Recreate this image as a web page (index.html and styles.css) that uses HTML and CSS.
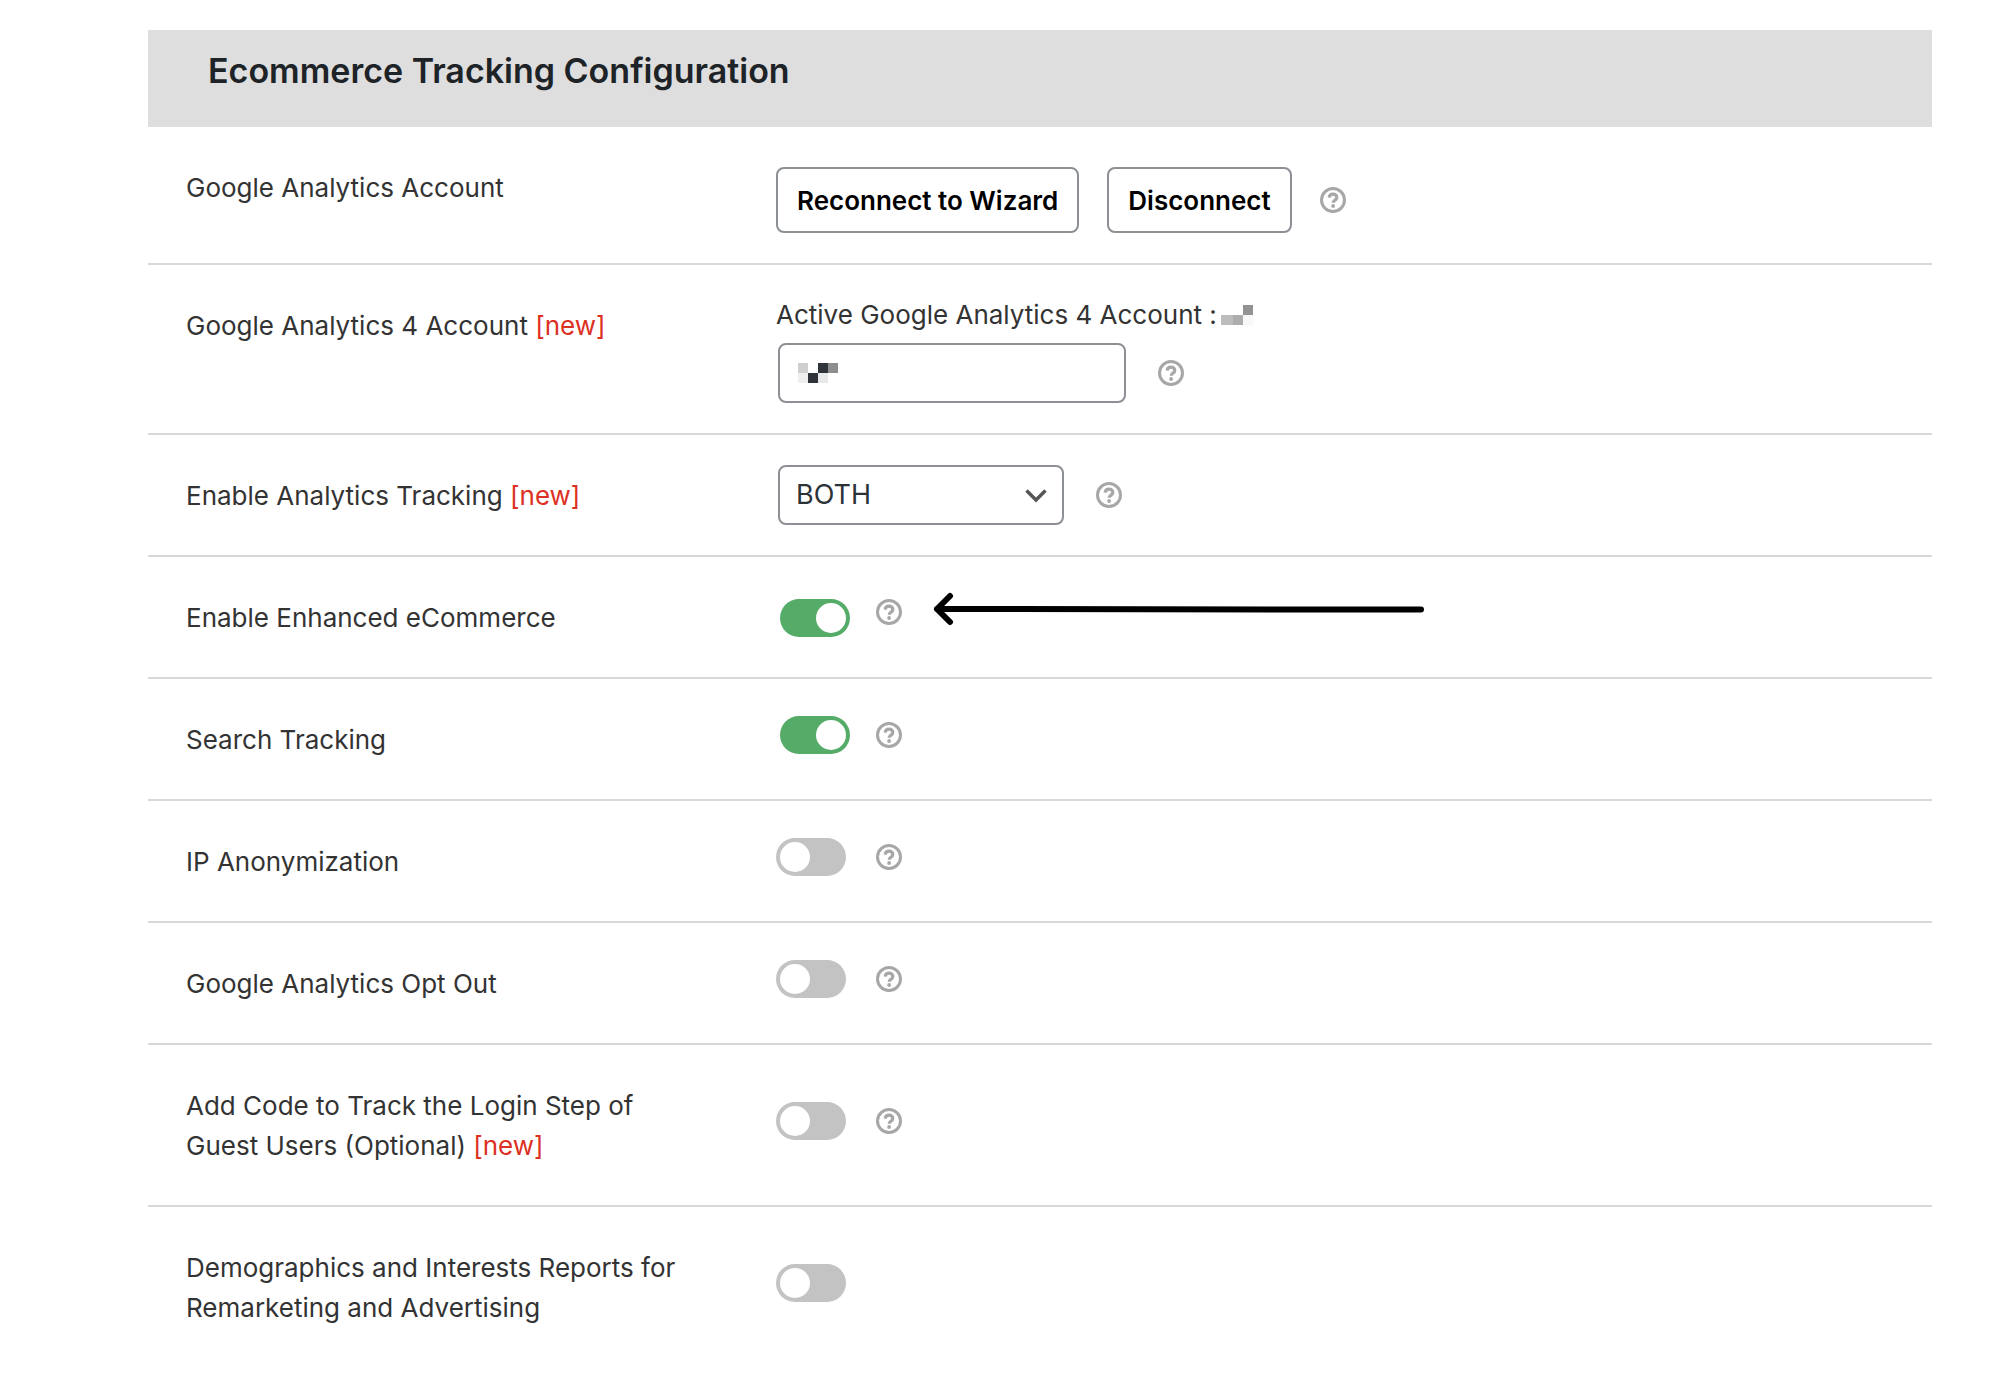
FILE: index.html
```html
<!DOCTYPE html>
<html lang="en">
<head>
  <meta charset="UTF-8" />
  <meta name="viewport" content="width=device-width, initial-scale=1.0" />
  <title>Ecommerce Tracking Configuration</title>
  <link rel="stylesheet" href="styles.css">
</head>
<body>
  <!-- shared help icon -->
  <svg class="defs" aria-hidden="true">
    <symbol id="help" viewBox="0 0 26 26">
      <circle cx="13" cy="13" r="11.5" fill="none" stroke="#a7a7a7" stroke-width="3" />
      <path d="M9.200 10.600C9.400 8.400 10.900 7.200 13 7.200c2.200 0 3.800 1.300 3.800 3.200 0 2.800-3.600 2.700-3.600 5.400" fill="none" stroke="#a7a7a7" stroke-width="3.2" />
      <circle cx="13.100" cy="19" r="1.900" fill="#a7a7a7" />
    </symbol>
  </svg>

  <form class="settings">
    <h1>Ecommerce Tracking Configuration</h1>

    <div class="row">
      <div class="label">Google Analytics Account</div>
      <div class="controls buttons">
        <button type="button">Reconnect to Wizard</button>
        <button type="button">Disconnect</button>
        <svg class="help"><use href="#help" /></svg>
      </div>
    </div>

    <div class="row">
      <label class="label" for="ga4">Google Analytics 4 Account <span class="new">[new]</span></label>
      <div class="account">
        <div class="active">Active Google Analytics 4 Account :
          <svg width="32" height="20" viewBox="0 0 32 20">
            <rect x="22" width="10" height="10" fill="#939393" />
            <rect y="10" width="12" height="10" fill="#bcbcbc" />
            <rect x="12" y="10" width="10" height="10" fill="#adadad" />
            <rect x="22" y="10" width="10" height="10" fill="#f8f8f8" />
          </svg>
        </div>
        <div class="controls fields">
          <div class="masked">
            <input type="text" id="ga4">
            <svg width="40" height="20" viewBox="0 0 40 20">
              <rect width="10" height="10" fill="#cfcfd0" />
              <rect x="20" width="10" height="10" fill="#2f343a" />
              <rect x="30" width="10" height="10" fill="#8d8d8f" />
              <rect y="10" width="10" height="10" fill="#efefef" />
              <rect x="10" y="10" width="10" height="10" fill="#2f343a" />
              <rect x="20" y="10" width="10" height="10" fill="#e8e9eb" />
            </svg>
          </div>
          <svg class="help"><use href="#help" /></svg>
        </div>
      </div>
    </div>

    <div class="row">
      <label class="label" for="mode">Enable Analytics Tracking <span class="new">[new]</span></label>
      <div class="controls fields">
        <div class="dropdown">
          <select id="mode">
            <option>BOTH</option>
          </select>
          <svg width="22" height="14" viewBox="0 0 22 14"><path d="M1.500 1.500L11 11l9.500-9.500" fill="none" stroke="#555" stroke-width="3.400" /></svg>
        </div>
        <svg class="help"><use href="#help" /></svg>
      </div>
    </div>

    <div class="row">
      <label class="label" for="enhanced">Enable Enhanced eCommerce</label>
      <div class="controls switches pointed">
        <div class="switch"><input type="checkbox" id="enhanced" checked></div>
        <svg class="help"><use href="#help" /></svg>
        <svg class="arrow" width="494" height="36" viewBox="0 0 494 36"><path d="M18 5L5 18l13 13M5 18l484 .6" fill="none" stroke="#000" stroke-width="6" stroke-linecap="round" stroke-linejoin="round" /></svg>
      </div>
    </div>

    <div class="row">
      <label class="label" for="search">Search Tracking</label>
      <div class="controls switches">
        <div class="switch"><input type="checkbox" id="search" checked></div>
        <svg class="help"><use href="#help" /></svg>
      </div>
    </div>

    <div class="row">
      <label class="label" for="ip">IP Anonymization</label>
      <div class="controls switches">
        <div class="switch"><input type="checkbox" id="ip"></div>
        <svg class="help"><use href="#help" /></svg>
      </div>
    </div>

    <div class="row">
      <label class="label" for="optout">Google Analytics Opt Out</label>
      <div class="controls switches">
        <div class="switch"><input type="checkbox" id="optout"></div>
        <svg class="help"><use href="#help" /></svg>
      </div>
    </div>

    <div class="row">
      <label class="label" for="login">Add Code to Track the Login Step of Guest Users (Optional) <span class="new">[new]</span></label>
      <div class="controls switches">
        <div class="switch"><input type="checkbox" id="login"></div>
        <svg class="help"><use href="#help" /></svg>
      </div>
    </div>

    <div class="row">
      <label class="label" for="demographics">Demographics and Interests Reports for Remarketing and Advertising</label>
      <div class="controls switches">
        <div class="switch"><input type="checkbox" id="demographics"></div>
      </div>
    </div>
  </form>
</body>
</html>
```
FILE: styles.css
```css
* {
  box-sizing: border-box;
}
body {
  margin: 0;
  background: #fff;
  color: #333;
  font-family: Inter, "Liberation Sans", sans-serif;
  font-size: 26px;
  line-height: 40px;
}
svg {
  display: block;
  flex: none;
}
.defs {
  display: none;
}
.settings {
  margin: 30px 82px 0 148px;
}
h1 {
  margin: 0;
  padding: 21px 60px 36px;
  background: #dedede;
  color: #1d2327;
  font-size: 34px;
  font-weight: 600;
}
.row {
  display: grid;
  grid-template-columns: 590px 1fr;
  padding-left: 38px;
  border-bottom: 2px solid #d8d8d8;
}
.row:last-child {
  border-bottom: 0;
}
.label {
  max-width: 500px;
  padding: 41px 0 39px;
}
.new {
  color: #dc3023;
}
.controls {
  display: flex;
  align-items: center;
}
.help {
  width: 26px;
  height: 26px;
}

/* buttons */
.buttons {
  gap: 28px;
  padding: 40px 0 30px;
}
button {
  height: 66px;
  padding: 1px 19px 0;
  border: 2px solid #8c8f94;
  border-radius: 8px;
  background: #fff;
  color: #000;
  font: inherit;
  font-weight: 600;
}

/* text box and drop-down */
.account {
  padding: 30px 0;
}
.active {
  display: flex;
  align-items: center;
  gap: 4px;
  margin-bottom: 8px;
}
.fields {
  gap: 32px;
  padding-left: 2px;
}
.masked,
.dropdown {
  position: relative;
}
input[type="text"],
select {
  display: block;
  height: 60px;
  padding: 0 16px;
  border: 2px solid #8c8f94;
  border-radius: 8px;
  background: #fff;
  color: #2c3338;
  font: inherit;
  font-size: 27px;
}
input[type="text"] {
  width: 348px;
}
.masked svg {
  position: absolute;
  top: 20px;
  left: 20px;
}
select {
  appearance: none;
  width: 286px;
}
.dropdown svg {
  position: absolute;
  top: 24px;
  right: 17px;
  pointer-events: none;
}

/* switches */
.switches {
  gap: 26px;
  padding-bottom: 9px;
}
.switch {
  display: flex;
  width: 74px;
}
.switch:has(:checked) {
  justify-content: flex-end;
}
input[type="checkbox"] {
  appearance: none;
  display: flex;
  width: 70px;
  height: 38px;
  margin: 0;
  padding: 4px;
  border-radius: 19px;
  background: #c3c3c3;
}
input[type="checkbox"]::before {
  content: "";
  width: 30px;
  height: 30px;
  border-radius: 50%;
  background: #fff;
}
input[type="checkbox"]:checked {
  justify-content: flex-end;
  background: #55ac68;
}
.pointed {
  position: relative;
  align-items: flex-start;
  padding-top: 42px;
}
.arrow {
  position: absolute;
  top: 34px;
  left: 156px;
}
```
